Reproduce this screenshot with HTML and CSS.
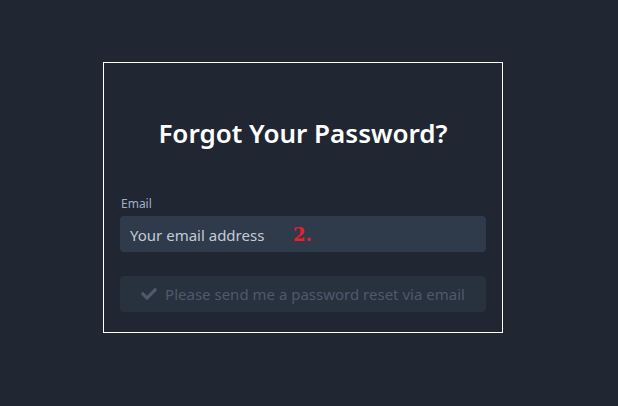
FILE: index.html
```html
<!DOCTYPE html>
<html>
<head>
<meta charset="utf-8">
<link rel="stylesheet" href="styles.css">
</head>
<body>
<div class="card">
  <h1 class="title">Forgot Your Password?</h1>
  <label class="label" for="email">Email</label>
  <div class="field">
    <div class="input" id="email">Your email address</div>
    <span class="marker">2.</span>
  </div>
  <div class="button">
    <svg class="check" viewBox="0 0 512 512" width="16" height="16"><path d="M173.9 439.4l-166.4-166.4c-10-10-10-26.2 0-36.2l36.2-36.2c10-10 26.2-10 36.2 0L192 312.7 432.1 72.6c10-10 26.2-10 36.2 0l36.2 36.2c10 10 10 26.2 0 36.2L210.1 439.4c-10 10-26.2 10-36.2 0z" fill="currentColor"/></svg>
    <span>Please send me a password reset via email</span>
  </div>
</div>
</body>
</html>
```
FILE: styles.css
```css
html, body {
  margin: 0;
  padding: 0;
}
body {
  background: #202733;
  width: 618px;
  height: 406px;
  font-family: "Noto Sans", "Open Sans", sans-serif;
  padding: 62px 0 0 103px;
  box-sizing: border-box;
}
.card {
  width: 400px;
  height: 271px;
  box-sizing: border-box;
  border: 1px solid #ffffff;
  padding: 54px 16px 0 16px;
}
.title {
  margin: 0 0 47px 0;
  font-size: 26px;
  line-height: 32px;
  font-weight: 600;
  color: #ffffff;
  text-align: center;
}
.label {
  display: block;
  font-size: 12px;
  line-height: 16px;
  color: #a0b0c6;
  margin: 0 0 4px 1px;
}
.field {
  position: relative;
}
.input {
  height: 36px;
  box-sizing: border-box;
  border-radius: 4px;
  background: #2f3a4a;
  color: #c3ccd8;
  font-size: 15px;
  line-height: 36px;
  padding: 1px 10px 0 10px;
}
.marker {
  position: absolute;
  left: 173px;
  top: 7px;
  font-family: "DejaVu Serif", "Liberation Serif", serif;
  font-weight: 700;
  font-size: 18px;
  line-height: 24px;
  color: #e8202a;
}
.button {
  margin-top: 24px;
  height: 36px;
  border-radius: 4px;
  background: #28313e;
  color: #4e5a6c;
  font-size: 15px;
  display: flex;
  align-items: center;
  justify-content: center;
  gap: 8px;
}
.check {
  display: block;
}
```
